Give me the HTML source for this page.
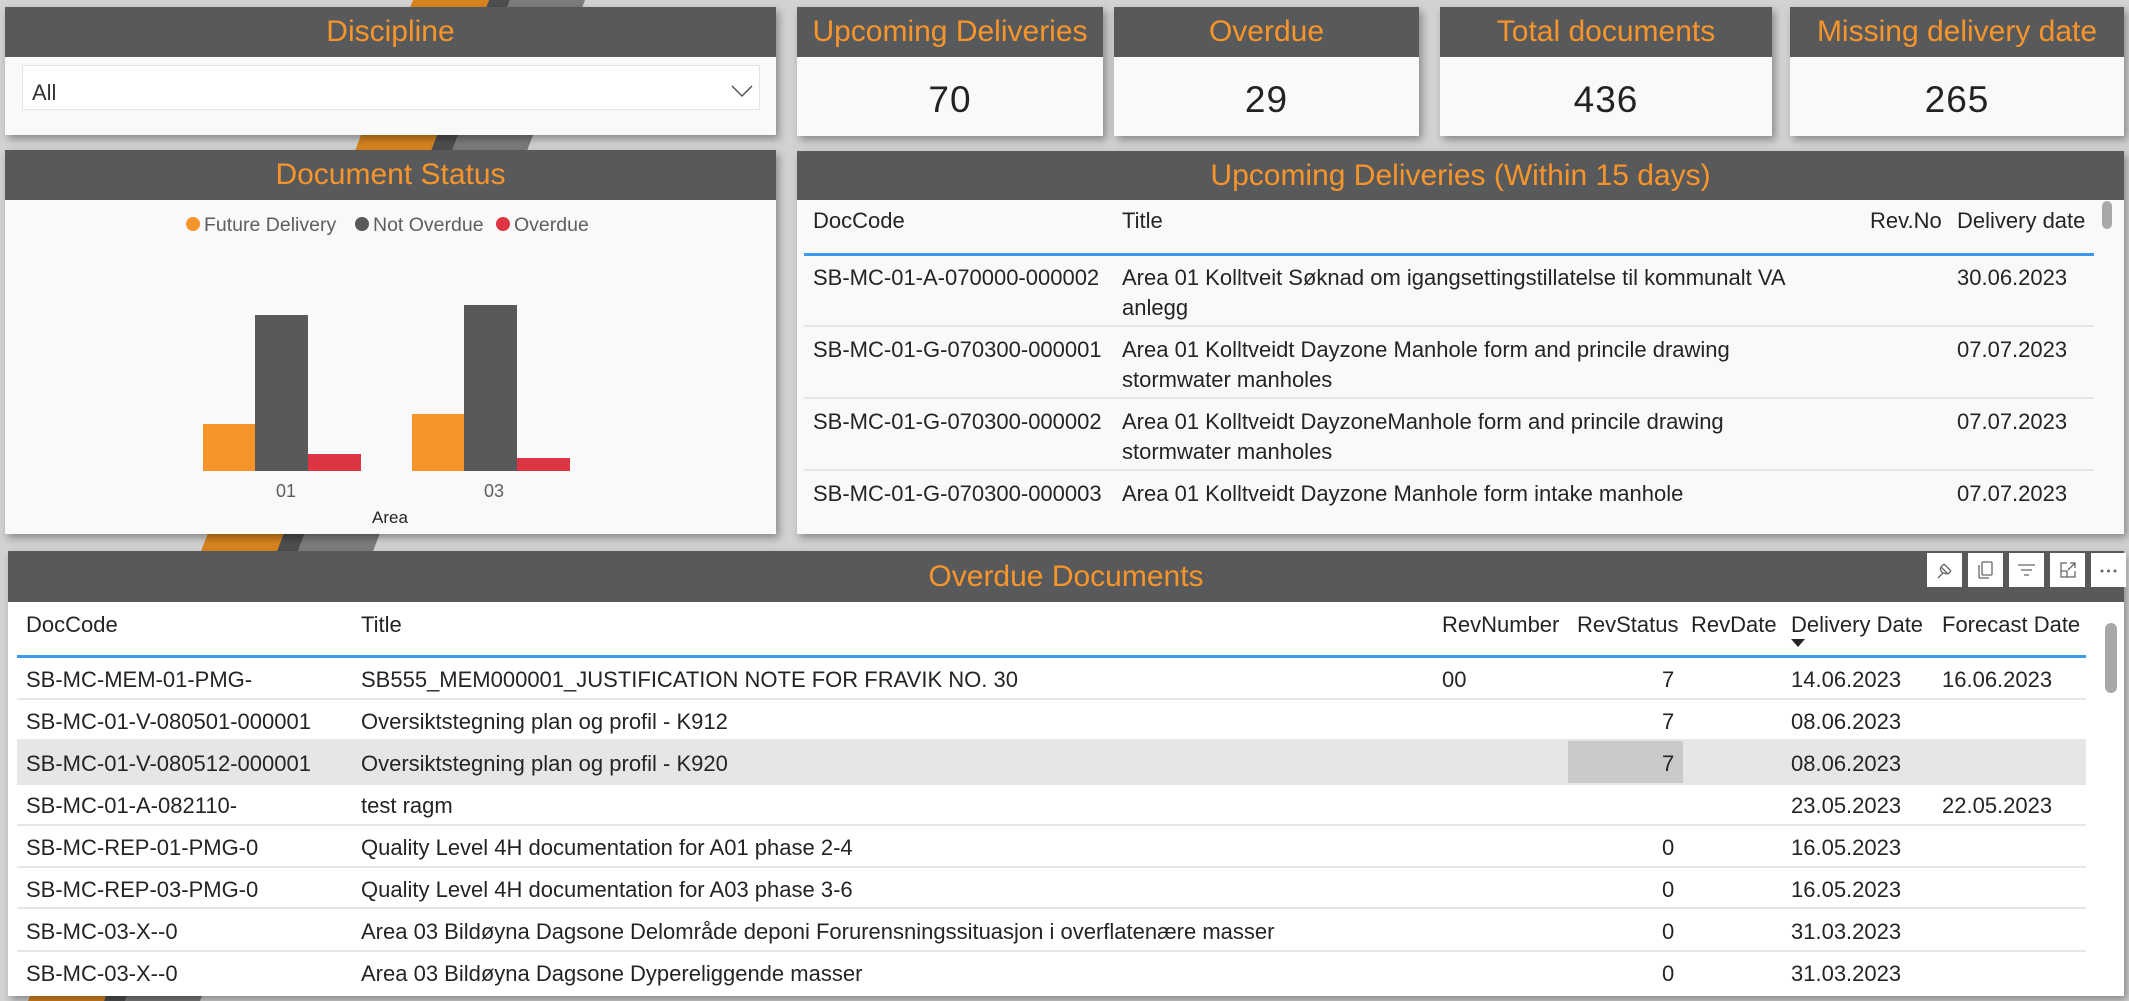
<!DOCTYPE html>
<html><head><meta charset="utf-8"><style>
*{margin:0;padding:0;box-sizing:border-box}
body{width:2129px;height:1001px;overflow:hidden;background:#d2d2d2;font-family:"Liberation Sans",sans-serif;position:relative;color:#252423}
.a{position:absolute}
.p{position:absolute;background:#f9f9f9;box-shadow:3px 4px 8px rgba(0,0,0,.35)}
.h{position:absolute;left:0;right:0;top:0;background:#58595b;color:#f7952b;text-align:center;font-size:30px}
.t{position:absolute;font-size:22px;white-space:nowrap;color:#252423}
.ln{position:absolute;height:2px;background:#e6e6e6}
.v{position:absolute;left:0;right:0;text-align:center;font-size:37px;color:#222;letter-spacing:1px}
</style></head><body>
<svg class="a" style="left:0;top:0" width="2129" height="1001">
<polygon points="413,0 489,0 104,1001 28,1001" fill="#d8841f"/>
<polygon points="489,0 510,0 125,1001 104,1001" fill="#4e4e4e"/>
<polygon points="510,0 585,0 200,1001 125,1001" fill="#7c7c7c"/>
</svg>

<!-- Discipline -->
<div class="p" style="left:5px;top:7px;width:771px;height:128px">
<div class="h" style="height:50px;line-height:50px">Discipline</div>
<div class="a" style="left:17px;top:58px;width:738px;height:45px;background:#fff;border:1px solid #e4e4e4"></div>
<div class="t" style="left:27px;top:73px;font-size:22px;color:#333">All</div>
<svg class="a" style="left:726px;top:77px" width="22" height="14"><path d="M1 2 L11 12 L21 2" stroke="#555" stroke-width="1.5" fill="none"/></svg>
</div>

<!-- KPI cards -->
<div class="p" style="left:797px;top:7px;width:306px;height:129px"><div class="h" style="height:50px;line-height:50px">Upcoming Deliveries</div><div class="v" style="top:72px">70</div></div>
<div class="p" style="left:1114px;top:7px;width:305px;height:129px"><div class="h" style="height:50px;line-height:50px">Overdue</div><div class="v" style="top:72px">29</div></div>
<div class="p" style="left:1440px;top:7px;width:332px;height:129px"><div class="h" style="height:50px;line-height:50px">Total documents</div><div class="v" style="top:72px">436</div></div>
<div class="p" style="left:1790px;top:7px;width:334px;height:129px"><div class="h" style="height:50px;line-height:50px">Missing delivery date</div><div class="v" style="top:72px">265</div></div>

<!-- Document Status -->
<div class="p" style="left:5px;top:150px;width:771px;height:384px">
<div class="h" style="height:50px;line-height:50px">Document Status</div>
</div>
<svg class="a" style="left:0;top:200px" width="776" height="334">
<circle cx="193" cy="24" r="7" fill="#f7952b"/><text x="204" y="31" font-size="19.5" fill="#605e5c" font-family="Liberation Sans">Future Delivery</text>
<circle cx="362" cy="24" r="7" fill="#58595b"/><text x="373" y="31" font-size="19.5" fill="#605e5c" font-family="Liberation Sans">Not Overdue</text>
<circle cx="503" cy="24" r="7" fill="#dd3544"/><text x="514" y="31" font-size="19.5" fill="#605e5c" font-family="Liberation Sans">Overdue</text>
<rect x="203" y="224" width="52" height="47" fill="#f7952b"/>
<rect x="255" y="115" width="53" height="156" fill="#58595b"/>
<rect x="308" y="254" width="53" height="17" fill="#dd3544"/>
<rect x="412" y="214" width="52" height="57" fill="#f7952b"/>
<rect x="464" y="105" width="53" height="166" fill="#58595b"/>
<rect x="517" y="258" width="53" height="13" fill="#dd3544"/>
<text x="286" y="297" font-size="18" fill="#605e5c" text-anchor="middle" font-family="Liberation Sans">01</text>
<text x="494" y="297" font-size="18" fill="#605e5c" text-anchor="middle" font-family="Liberation Sans">03</text>
<text x="390" y="323" font-size="17" fill="#252423" text-anchor="middle" font-family="Liberation Sans">Area</text>
</svg>

<!-- Upcoming Deliveries table -->
<div class="p" style="left:797px;top:151px;width:1327px;height:383px;overflow:hidden">
<div class="h" style="height:49px;line-height:49px">Upcoming Deliveries (Within 15 days)</div>
<div class="t" style="left:16px;top:57px">DocCode</div>
<div class="t" style="left:325px;top:57px">Title</div>
<div class="t" style="left:1073px;top:57px">Rev.No</div>
<div class="t" style="left:1160px;top:57px">Delivery date</div>
<div class="a" style="left:7px;width:1290px;top:102px;height:3px;background:#3d99f0"></div>
<div class="t" style="left:16px;top:114px">SB-MC-01-A-070000-000002</div>
<div class="t" style="left:325px;top:114px">Area 01 Kolltveit Søknad om igangsettingstillatelse til kommunalt VA</div>
<div class="t" style="left:325px;top:144px">anlegg</div>
<div class="t" style="left:1160px;top:114px">30.06.2023</div>
<div class="ln" style="left:7px;width:1290px;top:174px"></div>
<div class="t" style="left:16px;top:186px">SB-MC-01-G-070300-000001</div>
<div class="t" style="left:325px;top:186px">Area 01 Kolltveidt Dayzone Manhole form and princile drawing</div>
<div class="t" style="left:325px;top:216px">stormwater manholes</div>
<div class="t" style="left:1160px;top:186px">07.07.2023</div>
<div class="ln" style="left:7px;width:1290px;top:246px"></div>
<div class="t" style="left:16px;top:258px">SB-MC-01-G-070300-000002</div>
<div class="t" style="left:325px;top:258px">Area 01 Kolltveidt DayzoneManhole form and princile drawing</div>
<div class="t" style="left:325px;top:288px">stormwater manholes</div>
<div class="t" style="left:1160px;top:258px">07.07.2023</div>
<div class="ln" style="left:7px;width:1290px;top:318px"></div>
<div class="t" style="left:16px;top:330px">SB-MC-01-G-070300-000003</div>
<div class="t" style="left:325px;top:330px">Area 01 Kolltveidt Dayzone Manhole form intake manhole</div>
<div class="t" style="left:1160px;top:330px">07.07.2023</div>
<div class="a" style="left:0;right:0;top:362px;height:21px;background:#f9f9f9"></div>
<div class="a" style="left:1305px;top:50px;width:10px;height:28px;border-radius:5px;background:#a8a8a8"></div>
</div>

<!-- Overdue Documents -->
<div class="p" style="left:8px;top:551px;width:2116px;height:445px;background:#fff;overflow:hidden">
<div class="h" style="height:51px;line-height:51px">Overdue Documents</div>
</div>
<div class="a" style="left:8px;top:551px">
<div class="t" style="left:18px;top:61px">DocCode</div>
<div class="t" style="left:353px;top:61px">Title</div>
<div class="t" style="left:1434px;top:61px">RevNumber</div>
<div class="t" style="left:1569px;top:61px">RevStatus</div>
<div class="t" style="left:1683px;top:61px">RevDate</div>
<div class="t" style="left:1783px;top:61px">Delivery Date</div>
<div class="t" style="left:1934px;top:61px">Forecast Date</div>
<svg class="a" style="left:1783px;top:88px" width="14" height="9"><path d="M0 0 L14 0 L7 8 Z" fill="#252423"/></svg>
<div class="a" style="left:9px;width:2069px;top:104px;height:3px;background:#3d99f0"></div>
<div class="a" style="left:9px;width:2069px;top:189px;height:43px;background:#e6e6e6"></div>
<div class="a" style="left:1560px;width:115px;top:189px;height:43px;background:#cacaca"></div>
<div class="ln" style="left:9px;width:2069px;top:147px"></div>
<div class="ln" style="left:9px;width:2069px;top:188px"></div>
<div class="ln" style="left:9px;width:2069px;top:232px"></div>
<div class="ln" style="left:9px;width:2069px;top:273px"></div>
<div class="ln" style="left:9px;width:2069px;top:315px"></div>
<div class="ln" style="left:9px;width:2069px;top:356px"></div>
<div class="ln" style="left:9px;width:2069px;top:399px"></div>

<div class="t" style="left:18px;top:116px">SB-MC-MEM-01-PMG-</div>
<div class="t" style="left:353px;top:116px">SB555_MEM000001_JUSTIFICATION NOTE FOR FRAVIK NO. 30</div>
<div class="t" style="left:1434px;top:116px">00</div>
<div class="t" style="left:1654px;top:116px">7</div>
<div class="t" style="left:1783px;top:116px">14.06.2023</div>
<div class="t" style="left:1934px;top:116px">16.06.2023</div>

<div class="t" style="left:18px;top:158px">SB-MC-01-V-080501-000001</div>
<div class="t" style="left:353px;top:158px">Oversiktstegning plan og profil - K912</div>
<div class="t" style="left:1654px;top:158px">7</div>
<div class="t" style="left:1783px;top:158px">08.06.2023</div>

<div class="t" style="left:18px;top:200px">SB-MC-01-V-080512-000001</div>
<div class="t" style="left:353px;top:200px">Oversiktstegning plan og profil - K920</div>
<div class="t" style="left:1654px;top:200px">7</div>
<div class="t" style="left:1783px;top:200px">08.06.2023</div>

<div class="t" style="left:18px;top:242px">SB-MC-01-A-082110-</div>
<div class="t" style="left:353px;top:242px">test ragm</div>
<div class="t" style="left:1783px;top:242px">23.05.2023</div>
<div class="t" style="left:1934px;top:242px">22.05.2023</div>

<div class="t" style="left:18px;top:284px">SB-MC-REP-01-PMG-0</div>
<div class="t" style="left:353px;top:284px">Quality Level 4H documentation for A01 phase 2-4</div>
<div class="t" style="left:1654px;top:284px">0</div>
<div class="t" style="left:1783px;top:284px">16.05.2023</div>

<div class="t" style="left:18px;top:326px">SB-MC-REP-03-PMG-0</div>
<div class="t" style="left:353px;top:326px">Quality Level 4H documentation for A03 phase 3-6</div>
<div class="t" style="left:1654px;top:326px">0</div>
<div class="t" style="left:1783px;top:326px">16.05.2023</div>

<div class="t" style="left:18px;top:368px">SB-MC-03-X--0</div>
<div class="t" style="left:353px;top:368px">Area 03 Bildøyna Dagsone Delområde deponi Forurensningssituasjon i overflatenære masser</div>
<div class="t" style="left:1654px;top:368px">0</div>
<div class="t" style="left:1783px;top:368px">31.03.2023</div>

<div class="t" style="left:18px;top:410px">SB-MC-03-X--0</div>
<div class="t" style="left:353px;top:410px">Area 03 Bildøyna Dagsone Dypereliggende masser</div>
<div class="t" style="left:1654px;top:410px">0</div>
<div class="t" style="left:1783px;top:410px">31.03.2023</div>

<div class="a" style="left:2097px;top:72px;width:12px;height:70px;border-radius:6px;background:#a8a8a8"></div>
</div>

<!-- toolbar icons -->
<div class="a" style="left:1927px;top:553px;width:35px;height:34px;background:#fff"><svg width="35" height="34"><path d="M11 25 L16 20 M14 14 L21 21 M17 11 L24 18 M17 11 L14 14 M24 18 L21 21 M14 14 Q12 17 16 20 L21 21" stroke="#666" stroke-width="1.3" fill="none"/></svg></div>
<div class="a" style="left:1968px;top:553px;width:35px;height:34px;background:#fff"><svg width="35" height="34"><rect x="14" y="9" width="10" height="13" rx="1" stroke="#666" stroke-width="1.3" fill="none"/><path d="M11 12 V24 Q11 25 12 25 H21" stroke="#666" stroke-width="1.3" fill="none"/></svg></div>
<div class="a" style="left:2009px;top:553px;width:35px;height:34px;background:#fff"><svg width="35" height="34"><path d="M9 12 H26 M12 17 H23 M15 22 H20" stroke="#666" stroke-width="1.3"/></svg></div>
<div class="a" style="left:2050px;top:553px;width:35px;height:34px;background:#fff"><svg width="35" height="34"><path d="M17 10 H11 V24 H25 V18 M11 18 H17 V24 M20 10 H25 V15 M25 10 L18 17" stroke="#666" stroke-width="1.3" fill="none"/></svg></div>
<div class="a" style="left:2091px;top:553px;width:35px;height:34px;background:#fff"><svg width="35" height="34"><circle cx="11" cy="18" r="1.5" fill="#666"/><circle cx="17.5" cy="18" r="1.5" fill="#666"/><circle cx="24" cy="18" r="1.5" fill="#666"/></svg></div>
</body></html>
